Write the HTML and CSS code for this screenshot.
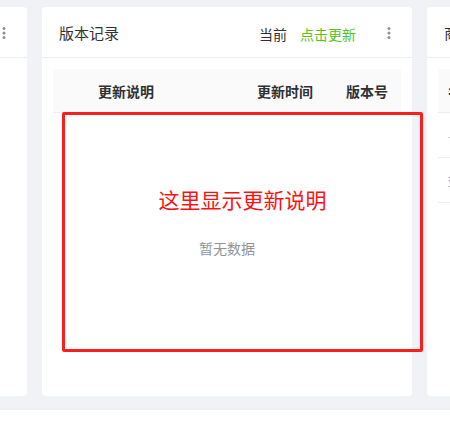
FILE: index.html
```html
<!DOCTYPE html>
<html>
<head>
  <title>版本记录</title>
  <link rel="stylesheet" href="styles.css">
</head>
<body>
  <div class="board">
    <div class="card">
      <div class="card-head">
        <span class="card-title">发布日志</span>
        <svg class="more" width="6" height="14" viewBox="0 0 6 14"><circle cx="3" cy="2.5" r="1.5"/><circle cx="3" cy="7" r="1.5"/><circle cx="3" cy="11.5" r="1.5"/></svg>
      </div>
      <div class="card-body"></div>
    </div>

    <div class="card card-main">
      <div class="card-head">
        <span class="card-title">版本记录</span>
        <span class="current">当前</span>
        <a class="update-link">点击更新</a>
        <svg class="more" width="6" height="14" viewBox="0 0 6 14"><circle cx="3" cy="2.5" r="1.5"/><circle cx="3" cy="7" r="1.5"/><circle cx="3" cy="11.5" r="1.5"/></svg>
      </div>
      <div class="card-body">
        <div class="table">
          <div class="table-head version-cols">
            <div></div>
            <div>更新说明</div>
            <div>更新时间</div>
            <div>版本号</div>
          </div>
          <div class="table-empty">暂无数据</div>
        </div>
      </div>
      <div class="note">这里显示更新说明</div>
    </div>

    <div class="card">
      <div class="card-head">
        <span class="card-title">商品列表</span>
      </div>
      <div class="card-body">
        <div class="table">
          <div class="table-head goods-cols">
            <div>名称</div>
            <div>数量</div>
          </div>
          <div class="table-row goods-cols">
            <div class="muted">—</div>
            <div class="muted">—</div>
          </div>
          <div class="table-row goods-cols">
            <div class="link">查看</div>
            <div class="link">编辑</div>
          </div>
        </div>
      </div>
    </div>
  </div>
</body>
</html>
```

FILE: styles.css
```css
body {
  margin: 0;
  background: #fff;
  font-family: "Noto Sans CJK SC", "Liberation Sans", sans-serif;
  color: #303133;
}

.board {
  display: flex;
  justify-content: center;
  gap: 15px;
  padding: 7px 0 14px 4px;
  background: #f0f2f5;
  overflow: hidden;
}

.card {
  flex: 0 0 370px;
  height: 389px;
  background: #fff;
  border-radius: 4px;
  display: flex;
  flex-direction: column;
  position: relative;
}

.card-head {
  height: 50px;
  border-bottom: 1px solid #ebeef5;
  display: flex;
  align-items: center;
  padding: 0 20px 0 17px;
  font-size: 14px;
  line-height: 20px;
}

.card-title {
  flex: 1;
  font-size: 15px;
  margin-top: 2px;
}

.current {
  margin-top: 4px;
}

.update-link {
  margin-left: 13px;
  margin-top: 4px;
  color: #52c41a;
  cursor: pointer;
}

.more {
  margin-left: 30px;
  margin-top: 2px;
  fill: #8c9198;
}

.card-body {
  flex: 1;
  padding: 11px;
  display: flex;
  flex-direction: column;
}

.table {
  flex: 1;
  display: flex;
  flex-direction: column;
  font-size: 14px;
}

.table-head {
  display: grid;
  height: 43px;
  align-items: center;
  background: #fafafa;
  border-bottom: 1px solid #ebeef5;
  font-weight: bold;
  color: #303133;
}

.table-row {
  display: grid;
  height: 44px;
  align-items: center;
  border-bottom: 1px solid #ebeef5;
}

.version-cols {
  grid-template-columns: 33px 159px 89px 1fr;
}

.version-cols > div {
  padding-left: 12px;
}

.goods-cols {
  grid-template-columns: 120px 1fr;
}

.goods-cols > div {
  padding-left: 10px;
}

.table-empty {
  flex: 1;
  display: flex;
  align-items: center;
  justify-content: center;
  color: #909399;
  font-size: 14px;
  padding-bottom: 2px;
}

.muted {
  color: #c0c4cc;
}

.link {
  color: #6b6fd6;
  font-size: 12px;
}

.note {
  position: absolute;
  left: 20px;
  top: 105px;
  width: 355px;
  height: 234px;
  border: 3px solid #fa1e1e;
  border-radius: 2px;
  color: #ff1010;
  font-size: 21px;
  line-height: 28px;
  text-align: center;
  padding-top: 70px;
  box-sizing: border-box;
  height: 240px;
  width: 361px;
}
```
